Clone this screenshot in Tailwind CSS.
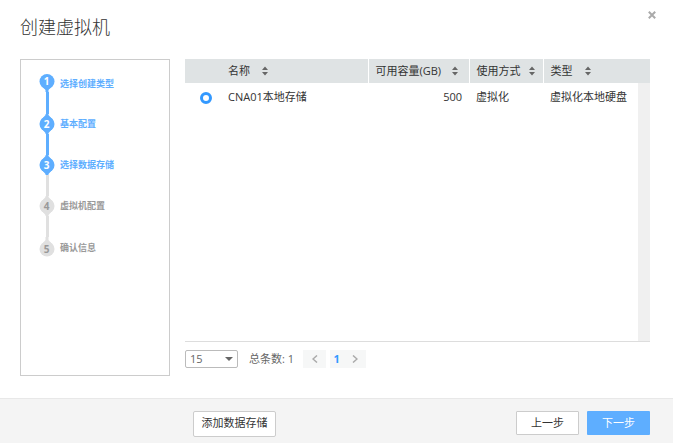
<!DOCTYPE html>
<html lang="zh-CN">
<head>
<meta charset="utf-8">
<meta name="viewport" content="width=device-width, initial-scale=1">
<title>创建虚拟机</title>
<script src="https://cdn.jsdelivr.net/npm/@tailwindcss/browser@4"></script>
</head>
<body class="flex min-h-screen flex-col bg-white font-['Open_Sans','Noto_Sans_CJK_SC',sans-serif] text-[11px] leading-4 text-[#333]">
<svg class="hidden" aria-hidden="true">
  <symbol id="sort" viewBox="0 0 6 10"><path d="M0 4 3 .5 6 4zM0 6h6L3 9.500z" fill="#666"/></symbol>
</svg>
<header class="flex h-[59px] items-start justify-between pl-5 pr-4">
  <h1 class="pt-[15px] text-lg font-light leading-6">创建虚拟机</h1>
  <button type="button" aria-label="关闭" class="mt-[9px] flex size-[11px] items-center justify-center text-[#aaa]">
    <svg class="size-2" viewBox="0 0 8 8" fill="none" stroke="currentColor" stroke-width="2"><path d="m.8.8 6.400 6.400M7.200.8.8 7.200"/></svg>
  </button>
</header>

<main class="flex flex-1 pb-[22px] pl-5 pr-[23px]">
  <aside class="w-[150px] shrink-0 border border-[#ccc] pl-[18px] pt-3">
    <ol class="text-[9px] font-bold leading-5 text-[#5eaeff]">
      <li class="flex h-[42px] gap-[5px] leading-6">
        <div class="flex w-4 flex-col items-center">
          <svg class="h-5 w-4 shrink-0" viewBox="0 0 16 20"><path d="M3 14h10l-3.500 4v2h-3v-2z" fill="#5eaeff"/><circle cx="8" cy="9.500" r="7.500" fill="#5eaeff"/><text x="7.500" y="12.500" text-anchor="middle" font-size="10" fill="#fff">1</text></svg>
          <span class="w-[3px] flex-1 bg-[#5eaeff]"></span>
        </div>
        <span>选择创建类型</span>
      </li>
      <li class="flex h-[41px] gap-[5px]">
        <div class="flex w-4 flex-col items-center">
          <svg class="h-5 w-4 shrink-0" viewBox="0 0 16 20"><path d="M6.500 0h3v1l4 4.500v9l-4 4.500v1h-3v-1l-4-4.500v-9l4-4.500z" fill="#5eaeff"/><circle cx="8" cy="10" r="7.500" fill="#5eaeff"/><text x="7.500" y="13.500" text-anchor="middle" font-size="10" fill="#fff">2</text></svg>
          <span class="w-[3px] flex-1 bg-[#5eaeff]"></span>
        </div>
        <span>基本配置</span>
      </li>
      <li class="flex h-[41px] gap-[5px]" aria-current="step">
        <div class="flex w-4 flex-col items-center">
          <svg class="h-5 w-4 shrink-0" viewBox="0 0 16 20"><path d="M6.500 0h3v1l4 4.500v9l-4 4.500v1h-3v-1l-4-4.500v-9l4-4.500z" fill="#5eaeff"/><circle cx="8" cy="10" r="7.500" fill="#5eaeff"/><text x="7.500" y="13.500" text-anchor="middle" font-size="10" fill="#fff">3</text></svg>
          <span class="w-[3px] flex-1 bg-[#e0e0e0]"></span>
        </div>
        <span>选择数据存储</span>
      </li>
      <li class="flex h-[41px] gap-[5px] text-[#999]">
        <div class="flex w-4 flex-col items-center">
          <svg class="h-5 w-4 shrink-0" viewBox="0 0 16 20"><path d="M6.500 0h3v1l4 4.500v9l-4 4.500v1h-3v-1l-4-4.500v-9l4-4.500z" fill="#e0e0e0"/><circle cx="8" cy="10" r="7.500" fill="#e0e0e0"/><text x="7.500" y="13.500" text-anchor="middle" font-size="10" fill="#999">4</text></svg>
          <span class="w-[3px] flex-1 bg-[#e0e0e0]"></span>
        </div>
        <span>虚拟机配置</span>
      </li>
      <li class="flex gap-[5px] leading-[22px] text-[#999]">
        <div class="flex w-4 flex-col items-center">
          <svg class="h-5 w-4 shrink-0" viewBox="0 0 16 20"><path d="M6.500 0h3v3l3.500 4H3l3.500-4z" fill="#e0e0e0"/><circle cx="8" cy="12" r="7.500" fill="#e0e0e0"/><text x="7.500" y="15.500" text-anchor="middle" font-size="10" fill="#999">5</text></svg>
        </div>
        <span>确认信息</span>
      </li>
    </ol>
  </aside>

  <section class="ml-[15px] flex min-w-0 flex-1 flex-col">
    <div class="relative flex-1 border-b border-[#ddd]">
      <table class="w-full table-fixed text-left">
        <thead class="bg-[#dfe3e4]">
          <tr class="h-6">
            <th class="w-9 p-0" aria-label="选择"></th>
            <th class="border-r border-white px-[7px] py-0 font-normal"><span class="flex items-center gap-3">名称<svg class="h-[10px] w-[6px]"><use href="#sort"/></svg></span></th>
            <th class="w-[101px] border-r border-white px-[7px] py-0 font-normal"><span class="flex items-center gap-[11px] whitespace-nowrap">可用容量(GB)<svg class="h-[10px] w-[6px]"><use href="#sort"/></svg></span></th>
            <th class="w-[74px] border-r border-white py-0 pl-[7px] font-normal"><span class="flex items-center gap-2 whitespace-nowrap">使用方式<svg class="h-[10px] w-[6px]"><use href="#sort"/></svg></span></th>
            <th class="w-[107px] px-[7px] py-0 font-normal"><span class="flex items-center gap-3">类型<svg class="h-[10px] w-[6px]"><use href="#sort"/></svg></span></th>
          </tr>
        </thead>
        <tbody>
          <tr class="h-7">
            <td class="pl-[15px]"><input type="radio" name="store" checked aria-label="CNA01本地存储" class="mt-px block size-3 appearance-none rounded-full border-[3px] border-[#3399ff] bg-white"></td>
            <td class="px-[7px]">CNA01本地存储</td>
            <td class="px-[7px] text-right">500</td>
            <td class="px-[7px]">虚拟化</td>
            <td class="whitespace-nowrap px-[7px]">虚拟化本地硬盘</td>
          </tr>
        </tbody>
      </table>
      <div class="absolute bottom-0 right-0 top-6 w-3 bg-[#f0f0f0]"></div>
    </div>
    <div class="flex h-[34px] items-start pt-2 text-[#666]">
      <div class="relative">
        <select aria-label="每页条数" class="block h-[18px] w-[53px] appearance-none rounded-xs border border-[#bbb] bg-white pl-1 leading-4"><option>15</option></select>
        <svg class="pointer-events-none absolute right-[5px] top-[7px] h-1 w-2" viewBox="0 0 8 4"><path d="M0 0h8L4 4z" fill="#666"/></svg>
      </div>
      <p class="ml-[11px] leading-[18px]">总条数: 1</p>
      <nav aria-label="分页" class="ml-[9px] flex h-[18px] gap-1 text-[#aaa]">
        <button type="button" aria-label="上一页" class="flex w-[23px] items-center justify-center bg-[#f6f7f7]"><svg class="h-2 w-[6px]" viewBox="0 0 6 8" fill="none" stroke="currentColor" stroke-width="1.500"><path d="M5 .5 1 4l4 3.500"/></svg></button>
        <div class="flex bg-[#f6f7f7]">
          <a href="#" aria-current="page" class="w-[13px] text-center font-bold leading-[18px] text-[#3399ff]">1</a>
          <button type="button" aria-label="下一页" class="flex w-[23px] items-center justify-center"><svg class="h-2 w-[6px]" viewBox="0 0 6 8" fill="none" stroke="currentColor" stroke-width="1.500"><path d="m1 .5 4 3.500-4 3.500"/></svg></button>
        </div>
      </nav>
    </div>
  </section>
</main>

<footer class="flex h-[45px] items-start gap-2 border-t border-[#e8e8e8] bg-[#f4f4f4] pl-[193px] pr-[23px] pt-3">
  <button type="button" class="mr-auto h-[26px] w-[83px] rounded-xs border border-[#ccc] bg-white pb-0.5">添加数据存储</button>
  <button type="button" class="h-6 w-[63px] rounded-[1px] border border-[#ccc] bg-white">上一步</button>
  <button type="button" class="h-6 w-[63px] rounded-[1px] bg-[#5eaeff] text-white">下一步</button>
</footer>
</body>
</html>
